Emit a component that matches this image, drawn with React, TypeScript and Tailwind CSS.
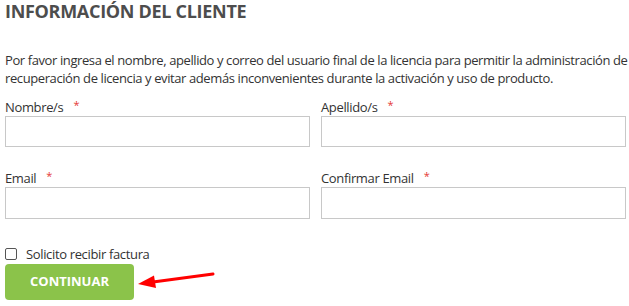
import React from "react"

const font = { fontFamily: '"Open Sans", "Noto Sans", Arial, sans-serif' }

function Field({ label, tall }: { label: string; tall?: boolean }) {
  return (
    <div className="flex flex-col">
      <label className="flex items-start text-[13px] leading-[18px] tracking-[-0.35px] text-[#333]">
        {label}
        <span className="ml-[10px] text-[11px] leading-[14px] text-[#e53935]">*</span>
      </label>
      <input
        type="text"
        className={
          tall
            ? "h-[32px] w-full border border-[#c8c8c8] bg-white px-2 text-[14px] outline-none"
            : "h-[31px] w-full border border-[#c8c8c8] bg-white px-2 text-[14px] outline-none"
        }
      />
    </div>
  )
}

export default function App() {
  return (
    <div className="relative h-[306px] w-[629px] overflow-hidden bg-white pl-[5px]" style={font}>
      <h2 className="mt-[-1px] text-[18px] font-bold leading-[24px] tracking-[-0.3px] text-[#4d4d4d]">
        INFORMACIÓN DEL CLIENTE
      </h2>

      <div className="mt-[28px] text-[13px] leading-[18px] tracking-[-0.4px] text-[#333]">
        <p className="whitespace-nowrap">
          Por favor ingresa el nombre, apellido y correo del usuario final de la licencia para permitir la administración de
        </p>
        <p className="whitespace-nowrap">
          recuperación de licencia y evitar además inconvenientes durante la activación y uso de producto.
        </p>
      </div>

      <div className="mt-[11px] grid w-[621px] grid-cols-2 gap-x-[11px] gap-y-[22px]">
        <Field label="Nombre/s" />
        <Field label="Apellido/s" />
        <Field label="Email" tall />
        <Field label="Confirmar Email" tall />
      </div>

      <label className="mt-[26px] flex h-[18px] items-center gap-[9px] text-[13px] leading-[18px] tracking-[-0.35px] text-[#333]">
        <span className="h-[12px] w-[12px] rounded-[2px] border border-[#555] bg-white" />
        Solicito recibir factura
      </label>

      <button className="mt-[1px] flex h-[36px] w-[129px] items-center justify-center rounded-[4px] bg-[#8bc34a] text-[13px] font-bold text-white">
        CONTINUAR
      </button>

      {/* red annotation arrow */}
      <svg className="absolute left-0 top-0" width="629" height="306" viewBox="0 0 629 306">
        <line x1="213" y1="274" x2="153" y2="282" stroke="#f00" strokeWidth="3" strokeLinecap="round" />
        <polygon points="138,284 154,275.5 156,288" fill="#f00" />
      </svg>
    </div>
  )
}
